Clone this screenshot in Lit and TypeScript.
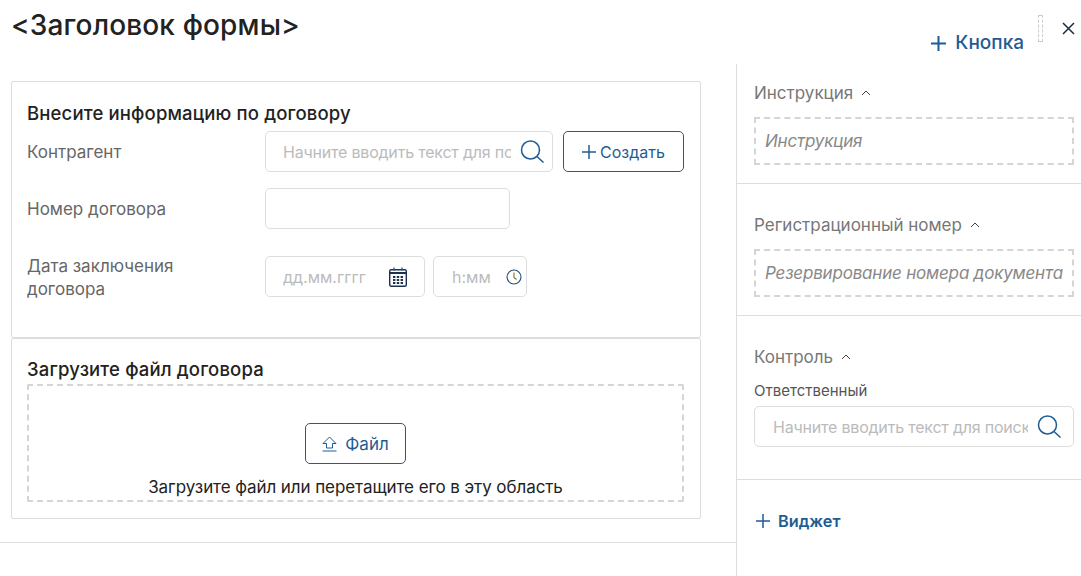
import { LitElement, html, css, svg } from "lit";
import { customElement } from "lit/decorators.js";

const search = svg`<svg class="ico" width="24" height="23" viewBox="0 0 24 23" fill="none" stroke="#1f5c94" stroke-width="1.5"><circle cx="10.5" cy="10" r="9"/><path d="M17 16.5l6.5 6"/></svg>`;
const plus = (s: number, w = 1.5) => svg`<svg width="${s}" height="${s}" viewBox="0 0 ${s} ${s}" stroke="#1f5c94" stroke-width="${w}" fill="none"><path d="M${s / 2} 0V${s}M0 ${s / 2}H${s}"/></svg>`;
const chev = svg`<svg width="10" height="6" viewBox="0 0 10 6" fill="none" stroke="#444" stroke-width="1"><path d="M1 5l4-4 4 4"/></svg>`;

@customElement("app-root")
export class AppRoot extends LitElement {
  static styles = css`
    :host { display: block; width: 1081px; height: 576px; overflow: hidden; background: #fff; font-family: Inter, "Noto Sans", sans-serif; color: #222; }
    * { box-sizing: border-box; }
    .head { height: 64px; display: flex; }
    h1 { margin: 0; padding: 9px 0 0 11px; font-size: 28px; line-height: 32px; font-weight: 500; letter-spacing: 0.15px; flex: 1; color: #222; }
    .tools { display: flex; align-items: flex-start; }
    .kn { display: flex; align-items: center; gap: 9px; margin-top: 31px; color: #1f5c94; font-size: 19px; font-weight: 500; line-height: 24px; }
    .dash { width: 5px; height: 27px; border: 1px dashed #ccc; margin: 15px 0 0 14px; }
    .x { margin: 22px 6px 0 19px; }
    .body { display: flex; height: 512px; }
    .main { width: 737px; height: 512px; border-right: 1px solid #ddd; padding: 17px 35px 0 11px; position: relative; }
    .rule { position: absolute; left: 0; right: 0; top: 478px; height: 1px; background: #e2e2e2; }
    .card { border: 1px solid #ddd; border-radius: 2px; padding: 20px 16px 0 15px; width: 690px; }
    .c1 { height: 257px; }
    .c2 { height: 181px; padding-top: 19px; }
    h2 { margin: 0; font-size: 18.5px; line-height: 22px; font-weight: 500; letter-spacing: 0.15px; color: #222; }
    .row { display: flex; }
    .lab { width: 238px; color: #666; font-size: 17px; line-height: 23px; }
    .inp { height: 41px; border: 1px solid #ddd; border-radius: 5px; display: flex; align-items: center; font-size: 16px; letter-spacing: -0.2px; color: #bbb; background: #fff; }
    .ph { flex: 1; overflow: hidden; white-space: nowrap; min-width: 0; }
    .btn { border: 1px solid #1f5c94; border-radius: 5px; height: 41px; display: flex; align-items: center; justify-content: center; color: #1f5c94; font-size: 16px; }
    .r1 { margin-top: 7px; height: 41px; align-items: center; }
    .r1 .lab { padding-top: 1px; }
    .r1 .inp { width: 288px; padding: 0 8px 0 17px; }
    .r1 .ph { margin-right: 9px; }
    .r1 .btn { width: 121px; margin-left: 10px; gap: 4px; }
    .r2 { margin-top: 16px; align-items: center; }
    .r2 .lab { padding-top: 2px; }
    .r2 .inp { width: 245px; }
    .r3 { margin-top: 27px; align-items: flex-start; }
    .r3 .lab { margin-top: -1px; }
    .d { width: 160px; padding: 0 17px 0 17px; letter-spacing: 0; }
    .t { width: 94px; margin-left: 8px; padding: 0 4px 0 18px; letter-spacing: 0; }
    .drop { margin-top: 4px; height: 118px; border: 2px dashed #d5d5d5; border-radius: 2px; display: flex; flex-direction: column; align-items: center; padding-top: 37px; }
    .drop .btn { width: 101px; gap: 8px; font-size: 17px; }
    .drop p { margin: 13px 0 0; font-size: 17px; line-height: 20px; letter-spacing: -0.08px; color: #222; }
    .side { flex: 1; min-width: 0; }
    .sec { padding: 0 0 0 17px; border-bottom: 1px solid #ddd; }
    .s1 { height: 120px; padding-top: 17px; }
    .s2 { height: 132px; padding-top: 29px; }
    .s3 { height: 164px; padding-top: 29px; }
    .st { display: flex; align-items: center; gap: 8px; color: #777; font-size: 17px; line-height: 24px; }
    .box { margin-top: 12px; width: 320px; height: 48px; border: 2px dashed #d5d5d5; display: flex; align-items: center; padding-left: 9px; font-style: italic; font-size: 17px; letter-spacing: -0.2px; color: #888; white-space: nowrap; overflow: hidden; }
    .s3 small { display: block; margin-top: 12px; font-size: 15px; line-height: 20px; color: #555; }
    .s3 .inp { margin-top: 5px; width: 320px; padding: 0 12px 0 18px; }
    .s3 .ph { margin-right: 9px; }
    .add { display: flex; align-items: center; gap: 8px; margin: 29px 0 0 19px; color: #1f5c94; font-size: 16.3px; font-weight: 600; line-height: 24px; }
  `;

  render() {
    return html`
      <div class="head">
        <h1>&lt;Заголовок формы&gt;</h1>
        <div class="tools">
          <div class="kn">${plus(15, 2)}<span>Кнопка</span></div>
          <div class="dash"></div>
          <svg class="x" width="13" height="13" viewBox="0 0 13 13" stroke="#1c2b3a" stroke-width="1.5" fill="none"><path d="M1 1l11 11M12 1L1 12"/></svg>
        </div>
      </div>
      <div class="body">
        <div class="main">
          <div class="card c1">
            <h2>Внесите информацию по договору</h2>
            <div class="row r1">
              <div class="lab">Контрагент</div>
              <div class="inp"><span class="ph">Начните вводить текст для поиска</span>${search}</div>
              <div class="btn">${plus(14)}<span>Создать</span></div>
            </div>
            <div class="row r2">
              <div class="lab">Номер договора</div>
              <div class="inp"></div>
            </div>
            <div class="row r3">
              <div class="lab">Дата заключения<br />договора</div>
              <div class="inp d"><span class="ph">дд.мм.гггг</span>
                <svg width="18" height="20" viewBox="0 0 18 20" fill="none" stroke="#1c3050" stroke-width="1.4"><rect x=".7" y="2.7" width="16.6" height="16.6" rx="1.5"/><path d="M.7 6h16.6" stroke-width="2"/><path d="M5 .5v3M13 .5v3" stroke="#1f5c94"/><path d="M4 10h2.4M7.8 10h2.4M11.6 10h2.4M4 13h2.4M7.8 13h2.4M11.6 13h2.4M4 16h2.4M7.8 16h2.4M11.6 16h2.4" stroke-width="1.8"/></svg>
              </div>
              <div class="inp t"><span class="ph">h:мм</span>
                <svg width="16" height="16" viewBox="0 0 16 16" fill="none" stroke="#1f4f7c" stroke-width="1.1"><circle cx="8" cy="8" r="7"/><path d="M8 3.5V8.5L10.5 10.5" stroke="#8a6d20"/></svg>
              </div>
            </div>
          </div>
          <div class="card c2">
            <h2>Загрузите файл договора</h2>
            <div class="drop">
              <div class="btn">
                <svg width="15" height="16" viewBox="0 0 15 16" fill="none" stroke="#1f5c94" stroke-width="1"><path d="M7.5 1L1 7.5h3.5V12h6V7.5H14z"/><path d="M.5 15h14"/></svg>
                <span>Файл</span>
              </div>
              <p>Загрузите файл или перетащите его в эту область</p>
            </div>
          </div>
          <div class="rule"></div>
        </div>
        <div class="side">
          <div class="sec s1">
            <div class="st">Инструкция ${chev}</div>
            <div class="box">Инструкция</div>
          </div>
          <div class="sec s2">
            <div class="st">Регистрационный номер ${chev}</div>
            <div class="box">Резервирование номера документа</div>
          </div>
          <div class="sec s3">
            <div class="st">Контроль ${chev}</div>
            <small>Ответственный</small>
            <div class="inp"><span class="ph">Начните вводить текст для поиска</span>${search}</div>
          </div>
          <div class="add">${plus(14)}<span>Виджет</span></div>
        </div>
      </div>
    `;
  }
}
